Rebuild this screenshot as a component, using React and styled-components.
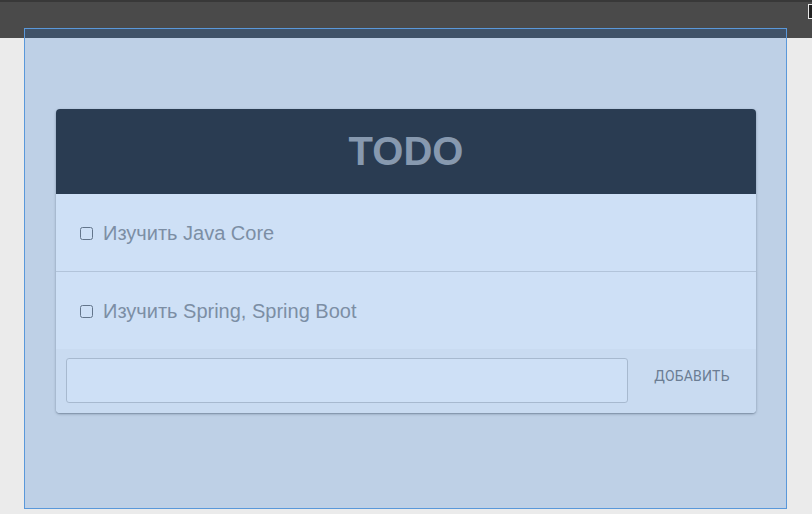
import React, { useState } from "react"
import styled, { createGlobalStyle } from "styled-components"

const GlobalStyle = createGlobalStyle`
  html, body {
    margin: 0;
    padding: 0;
    background: #ebebeb;
    font-family: "Liberation Sans", Arial, sans-serif;
  }
  #root {
    position: relative;
    min-height: 514px;
  }
`

export default function App() {
  const [todos, setTodos] = useState([
    { id: 1, title: "Изучить Java Core", done: false },
    { id: 2, title: "Изучить Spring, Spring Boot", done: false },
  ])
  const [text, setText] = useState("")

  const toggle = (id) =>
    setTodos(todos.map((t) => (t.id === id ? { ...t, done: !t.done } : t)))

  const add = () => {
    if (!text.trim()) return
    setTodos([...todos, { id: Date.now(), title: text, done: false }])
    setText("")
  }

  return (
    <>
      <GlobalStyle />
      <TopBar>
        <Cursor />
      </TopBar>
      <Main>
        <Card>
          <Header>TODO</Header>
          {todos.map((t) => (
            <Item key={t.id}>
              <Check type="checkbox" checked={t.done} onChange={() => toggle(t.id)} />
              <Title done={t.done}>{t.title}</Title>
            </Item>
          ))}
          <AddRow>
            <Input value={text} onChange={(e) => setText(e.target.value)} />
            <AddButton onClick={add}>Добавить</AddButton>
          </AddRow>
        </Card>
      </Main>
      <Highlight />
    </>
  )
}

const TopBar = styled.div`
  height: 36px;
  background: #4a4a4a;
  border-top: 2px solid #383838;
  position: relative;
`

const Cursor = styled.div`
  position: absolute;
  right: 0;
  top: 2px;
  width: 3px;
  height: 13px;
  border: 1px solid #e8e8e8;
  border-right: none;
  background: #222;
`

const Main = styled.div`
  width: 763px;
  margin-left: 24px;
  padding: 71px 32px 0;
  box-sizing: border-box;
`

const Card = styled.div`
  width: 700px;
  background: #ffffff;
  border-radius: 4px;
  overflow: hidden;
  box-shadow: 0 1px 3px rgba(0, 0, 0, 0.3), 0 1px 1px rgba(0, 0, 0, 0.14);
`

const Header = styled.div`
  height: 85px;
  display: flex;
  align-items: center;
  justify-content: center;
  background: #2d2d2d;
  color: #a4a4a5;
  font-size: 40px;
  font-weight: bold;
`

const Item = styled.label`
  display: flex;
  align-items: center;
  height: 76px;
  padding: 1px 24px 0;
  gap: 10px;
  border-bottom: 1px solid #dcdcdc;
  &:last-of-type {
    border-bottom: none;
  }
`

const Check = styled.input`
  margin: 0;
  width: 13px;
  height: 13px;
`

const Title = styled.span`
  font-size: 20px;
  color: #979797;
  text-decoration: ${(p) => (p.done ? "line-through" : "none")};
`

const AddRow = styled.div`
  display: flex;
  align-items: flex-start;
  padding: 9px 10px 10px;
  background: #f9f9f9;
`

const Input = styled.input`
  flex: 1;
  height: 45px;
  box-sizing: border-box;
  border: 1px solid #cecece;
  border-radius: 3px;
  background: #ffffff;
  outline: none;
  font-size: 16px;
  padding: 0 10px;
`

const AddButton = styled.button`
  width: 108px;
  height: 36px;
  margin-left: 10px;
  padding: 0;
  border: none;
  background: transparent;
  text-transform: uppercase;
  font-family: Roboto, "Liberation Sans", sans-serif;
  font-size: 14px;
  color: #808081;
  letter-spacing: 0.2px;
  cursor: pointer;
`

const Highlight = styled.div`
  position: absolute;
  top: 28px;
  left: 24px;
  width: 763px;
  height: 481px;
  box-sizing: border-box;
  background: rgba(32, 115, 212, 0.22);
  border: 1px solid #5a98da;
  pointer-events: none;
`
